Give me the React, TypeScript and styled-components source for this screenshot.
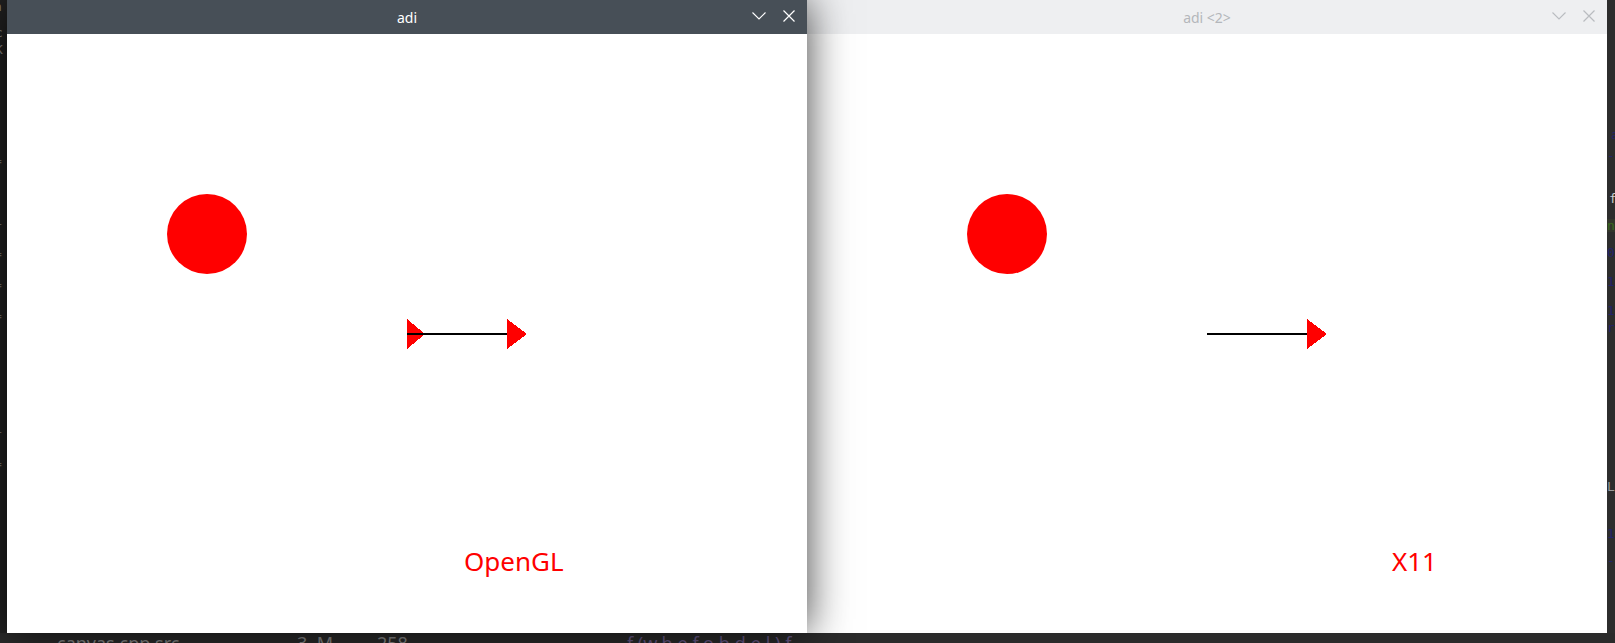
import React from "react";
import styled, { createGlobalStyle } from "styled-components";

const Global = createGlobalStyle`
  html, body { margin: 0; padding: 0; background: #2a2a2a; overflow: hidden; }
  body { font-family: "Noto Sans", "Open Sans", sans-serif; }
`;

const Page = styled.div`
  width: 1615px;
  height: 643px;
  display: flex;
  flex-direction: column;
  background: #2a2a2a;
  overflow: hidden;
`;

const TopRow = styled.div`
  display: flex;
  height: 633px;
`;

const SideStrip = styled.div<{ $w: number; $bg: string }>`
  width: ${(p) => p.$w}px;
  flex: none;
  background: ${(p) => p.$bg};
  overflow: hidden;
  display: flex;
  flex-direction: column;
  font-family: "DejaVu Sans Mono", monospace;
  font-size: 13px;
  line-height: 1;
`;

const Frag = styled.div<{ $c: string; $top: number; $shift: number; $bg?: string }>`
  margin-top: ${(p) => p.$top}px;
  color: ${(p) => p.$c};
  white-space: nowrap;
  margin-left: ${(p) => p.$shift}px;
  background: ${(p) => p.$bg || "transparent"};
`;

const Window = styled.div<{ $active?: boolean }>`
  width: 800px;
  flex: none;
  display: flex;
  flex-direction: column;
  position: relative;
  z-index: ${(p) => (p.$active ? 2 : 1)};
  box-shadow: ${(p) => (p.$active ? "0 0 40px rgba(0,0,0,0.75)" : "none")};
`;

const TitleBar = styled.div<{ $active?: boolean }>`
  height: 34px;
  flex: none;
  position: relative;
  display: flex;
  align-items: center;
  justify-content: center;
  background: ${(p) => (p.$active ? "#474f57" : "#eeeff1")};
  color: ${(p) => (p.$active ? "#ffffff" : "#b4b7bb")};
  font-size: 14px;
`;

const Controls = styled.div`
  position: absolute;
  right: 12px;
  top: 0;
  height: 31px;
  display: flex;
  align-items: center;
  gap: 17px;
`;

const Canvas = styled.div`
  position: relative;
  height: 599px;
  overflow: hidden;
  background: #ffffff;
`;

const Drawing = styled.svg`
  display: block;
  width: 800px;
  height: 600px;
`;

const BottomStrip = styled.div`
  height: 10px;
  flex: none;
  background: #2b2b2b;
  display: flex;
  align-items: flex-start;
  overflow: hidden;
  color: #8a8a8a;
  font-size: 18px;
  line-height: 1;
`;

const BottomItem = styled.span<{ $w: number; $c?: string }>`
  width: ${(p) => p.$w}px;
  flex: none;
  padding-top: 1px;
  color: ${(p) => p.$c || "#8a8a8a"};
  white-space: nowrap;
`;

const Chevron = ({ c }: { c: string }) => (
  <svg width="14" height="8" viewBox="0 0 14 8">
    <path d="M0.5 0.5 L7 7 L13.5 0.5" fill="none" stroke={c} strokeWidth="1.1" />
  </svg>
);

const Close = ({ c }: { c: string }) => (
  <svg width="12" height="12" viewBox="0 0 12 12">
    <path d="M0.5 0.5 L11.5 11.5 M11.5 0.5 L0.5 11.5" fill="none" stroke={c} strokeWidth="1.2" />
  </svg>
);

const Scene = ({ label, labelX, startHead }: { label: string; labelX: number; startHead: boolean }) => (
  <Drawing viewBox="0 0 800 600">
    <circle cx="200" cy="200" r="40" fill="#ff0000" />
    {startHead && (
      <polygon points="400,285 400,315 418,300" fill="#ff0000" shapeRendering="crispEdges" />
    )}
    <rect x="400" y="299" width="110" height="2" fill="#000000" shapeRendering="crispEdges" />
    <polygon points="500,285 500,315 520,300" fill="#ff0000" shapeRendering="crispEdges" />
    <text
      x={labelX}
      y="537"
      fill="#ff0000"
      fontFamily="'Noto Sans', 'Open Sans', sans-serif"
      fontSize="26"
    >
      {label}
    </text>
  </Drawing>
);

const WindowView = ({
  active,
  title,
  label,
  labelX,
  startHead,
}: {
  active?: boolean;
  title: string;
  label: string;
  labelX: number;
  startHead: boolean;
}) => {
  const iconColor = active ? "#ffffff" : "#b9bcc0";
  return (
    <Window $active={active}>
      <TitleBar $active={active}>
        {title}
        <Controls>
          <Chevron c={iconColor} />
          <Close c={iconColor} />
        </Controls>
      </TitleBar>
      <Canvas>
        <Scene label={label} labelX={labelX} startHead={startHead} />
      </Canvas>
    </Window>
  );
};

const leftFrags = [
  { c: "#8c8c8c", top: 0, shift: -6, t: "n" },
  { c: "#8c8c8c", top: 13, shift: -5, t: "c" },
  { c: "#8c8c8c", top: 4, shift: -5, t: "K" },
  { c: "#777", top: 40, shift: -6, t: "-" },
  { c: "#777", top: 12, shift: -6, t: "-" },
  { c: "#777", top: 20, shift: -6, t: "=" },
  { c: "#777", top: 20, shift: -6, t: "-" },
  { c: "#777", top: 18, shift: -6, t: "+" },
  { c: "#777", top: 16, shift: -6, t: "=" },
  { c: "#777", top: 18, shift: -6, t: "=" },
  { c: "#777", top: 18, shift: -6, t: "=" },
  { c: "#777", top: 40, shift: -6, t: "|" },
  { c: "#777", top: 20, shift: -6, t: "-" },
  { c: "#777", top: 18, shift: -6, t: "+" },
  { c: "#777", top: 18, shift: -6, t: "=" },
  { c: "#777", top: 18, shift: -6, t: "-" },
  { c: "#777", top: 18, shift: -6, t: "-" },
];

const rightFrags = [
  { c: "#23236a", top: 128, shift: 4, t: "a" },
  { c: "#23236a", top: 8, shift: 0, t: "-9" },
  { c: "#cfcfcf", top: 30, shift: 2, t: "f" },
  { c: "#3c6a1e", top: 14, shift: 0, t: "ne", bg: "#33362c" },
  { c: "#23236a", top: 14, shift: 0, t: "0" },
  { c: "#23236a", top: 16, shift: 0, t: "1" },
  { c: "#23236a", top: 16, shift: 0, t: "1" },
  { c: "#23236a", top: 4, shift: 0, t: "re" },
  { c: "#9a9a9a", top: 146, shift: 0, t: "Le" },
  { c: "#23236a", top: 34, shift: 0, t: "1" },
  { c: "#23236a", top: 14, shift: 0, t: "-" },
];

export default function App() {
  return (
    <Page>
      <Global />
      <TopRow>
        <SideStrip $w={7} $bg="#222222">
          {leftFrags.map((f, i) => (
            <Frag key={i} $c={f.c} $top={f.top} $shift={f.shift}>
              {f.t}
            </Frag>
          ))}
        </SideStrip>
        <WindowView active title="adi" label="OpenGL" labelX={457} startHead />
        <WindowView title="adi <2>" label="X11" labelX={585} startHead={false} />
        <SideStrip $w={8} $bg="#2d2d2d">
          {rightFrags.map((f, i) => (
            <Frag key={i} $c={f.c} $top={f.top} $shift={f.shift} $bg={f.bg}>
              {f.t}
            </Frag>
          ))}
        </SideStrip>
      </TopRow>
      <BottomStrip>
        <BottomItem $w={57}> </BottomItem>
        <BottomItem $w={240}>canvas.cpp src</BottomItem>
        <BottomItem $w={80}>3, M</BottomItem>
        <BottomItem $w={250}>258</BottomItem>
        <BottomItem $w={500} $c="#6a5a8a">f (w.h.e.f.o.h.d.e.l.) f</BottomItem>
      </BottomStrip>
    </Page>
  );
}
